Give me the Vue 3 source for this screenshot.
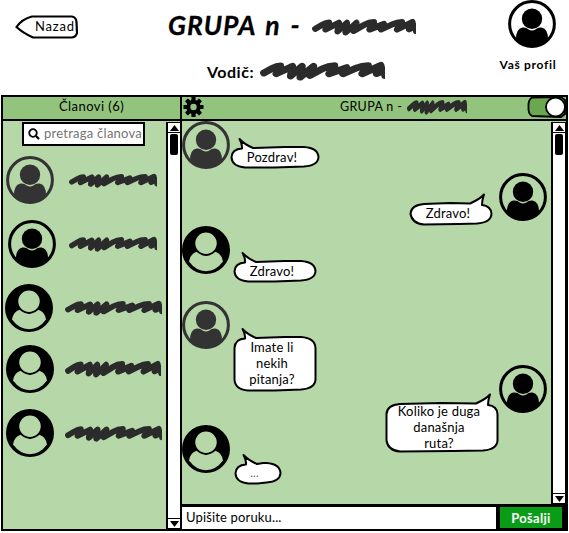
<script setup>
import { h } from 'vue'

const members = [
  { variant: 'solid', tone: 'gray', left: 3, top: 35, gap: 15, w: 88, h: 15 },
  { variant: 'solid', tone: 'black', left: 5, top: 16, gap: 13, w: 88, h: 16 },
  { variant: 'cutout', tone: 'black', left: 2, top: 16, gap: 12, w: 97, h: 16 },
  { variant: 'cutout', tone: 'black', left: 3, top: 13, gap: 11, w: 96, h: 18 },
  { variant: 'cutout', tone: 'black', left: 3, top: 16, gap: 11, w: 97, h: 17 },
]

const messages = [
  { lines: ['Pozdrav!'], side: 'left', variant: 'solid', tone: 'gray', rowH: 52, x: 0, y: 16, w: 90, h: 32 },
  { lines: ['Zdravo!'], side: 'right', variant: 'solid', tone: 'black', rowH: 53, x: 6, y: 20, w: 84, h: 33 },
  { lines: ['Zdravo!'], side: 'left', variant: 'cutout', tone: 'black', rowH: 75, x: 3, y: 25, w: 84, h: 32 },
  { lines: ['Imate li', 'nekih', 'pitanja?'], side: 'left', variant: 'solid', tone: 'gray', rowH: 64, x: 3, y: 26, w: 84, h: 65 },
  { lines: ['Koliko je duga', 'današnja', 'ruta?'], side: 'right', variant: 'solid', tone: 'black', rowH: 60, x: 0, y: 28, w: 114, h: 60 },
  { lines: ['...'], side: 'left', variant: 'cutout', tone: 'black', rowH: 60, x: 4, y: 28, w: 48, h: 32 },
]

function bubblePath(m) {
  const w = m.w - 1
  const b = m.h - 1.5
  const t = 10
  const r = Math.min(15, m.w * 0.3)
  const v = Math.min(11, (b - t) / 2)
  if (m.side === 'left') {
    return `M12 ${t + 1.5} Q12.500 7 9.500 2 Q14 7 23 ${t + 1} L${w * 0.62} ${t} L${w - r} ${t} Q${w - 1} ${t + 1} ${w - 0.5} ${t + v} L${w - 0.5} ${b - v} Q${w - 1} ${b - 2} ${w - r} ${b - 1} L${w * 0.5} ${b} L${r} ${b} Q2 ${b - 1} 1.5 ${b - v} L1.5 ${t + v} Q2 ${t + 2} 12 ${t + 1.5} Z`
  }
  return `M${w - 10} ${t + 2} Q${w - 10} 7 ${w - 8} 1.5 Q${w - 12} 6 ${w - 22} ${t + 0.5} L${w * 0.5} ${t} L${r} ${t + 1} Q2 ${t + 2} 1.5 ${t + v} L1.5 ${b - v} Q3 ${b - 1} ${r} ${b} L${w * 0.6} ${b - 0.5} L${w - r} ${b - 1} Q${w - 1} ${b - 2} ${w - 0.5} ${b - v} L${w - 0.5} ${t + v} Q${w - 1} ${t + 3} ${w - 10} ${t + 2} Z`
}

const Avatar = (props) =>
  h('svg', { viewBox: '0 0 48 48', width: 48, height: 48 },
    props.variant === 'cutout'
      ? [
          h('path', {
            'fill-rule': 'evenodd',
            fill: 'currentColor',
            d: 'M24 0A24 24 0 1 0 24 48A24 24 0 1 0 24 0Z M24 6.500A10.700 10.700 0 1 1 24 28A10.700 10.700 0 1 1 24 6.500Z M14.500 25.800Q24 34 33.500 25.800Q40 28 41 35.500Q34 45 24 45.200Q14 45 7 35.500Q8 28 14.500 25.800Z',
          }),
        ]
      : [
          h('circle', { cx: 24, cy: 24, r: 22.4, fill: 'none', stroke: 'currentColor', 'stroke-width': 3 }),
          h('circle', { cx: 24, cy: 18.7, r: 10.2, fill: 'currentColor' }),
          h('path', { fill: 'currentColor', d: 'M8 40Q7.500 29 14.500 27.500Q18 27 21 29.700Q24 31.200 27 29.700Q30 27 33.500 27.500Q40.500 29 40 40Q33 47 24 47Q15 47 8 40Z' }),
        ])
Avatar.props = ['variant']

const Scribble = (props) =>
  h('svg', {
    viewBox: props.short ? '0 0 60 16' : '0 0 104 18',
    width: props.w,
    height: props.h,
    preserveAspectRatio: 'none',
  }, [
    h('path', {
      fill: 'none',
      stroke: '#2b2b2b',
      'stroke-width': 6.2,
      'stroke-linecap': 'round',
      'stroke-linejoin': 'round',
      d: props.short
        ? 'M3.200 9L9 5.500Q12 4 14.500 4L12 9.500L24 4.500L22.500 12L34 4.500L32 12.500L43 4.500L41 12L57 4L52 10L62 9'
        : 'M3.200 10.800L10 6.800Q14 4.500 17 4.500L13.500 11.500L27 4.800L25.500 13.500L35 4.800L33.500 14.500L44.500 4.800L41.500 13L52 7Q57 4.200 62 4.200L57.500 11.500L72 6L69 11.500L80 6.500Q85 4.200 90 4.200L85 11.500L100.500 4L97 11.300L104 8L104 13',
    }),
  ])
Scribble.props = ['w', 'h', 'short']
</script>

<template>
  <div class="screen">
    <header class="top">
      <a class="back">
        <svg class="layer" width="64" height="24" viewBox="0 0 64 24"><path d="M17 1.500L57 1.500Q61 2 61.500 7L62 18Q61 22 57 22.500L18 22.500Q8 18 1.500 12Q7 4 17 1.500Z" fill="#fff" stroke="#000" stroke-width="2.200" /></svg>
        <span>Nazad</span>
      </a>
      <div class="headings">
        <h1><span>GRUPA n -</span><Scribble :w="104" :h="18" /></h1>
        <h2><span>Vodič:</span><Scribble :w="125" :h="20" /></h2>
      </div>
      <div class="profile">
        <Avatar variant="solid" />
        <span>Vaš profil</span>
      </div>
    </header>

    <main class="panels">
      <section class="members">
        <div class="bar bar-members"><span>Članovi (6)</span></div>
        <div class="body">
          <div class="list">
            <label class="search">
              <svg width="12" height="12" viewBox="0 0 12 12"><circle cx="5" cy="5" r="3.800" fill="none" stroke="#000" stroke-width="1.800" /><path d="M8 8L11 11" stroke="#000" stroke-width="2.200" /></svg>
              <span>pretraga članova</span>
            </label>
            <div v-for="(m, i) in members" :key="i" class="member" :class="m.tone" :style="{ marginTop: m.top + 'px', paddingLeft: m.left + 'px', gap: m.gap + 'px' }">
              <Avatar :variant="m.variant" />
              <Scribble :w="m.w" :h="m.h" />
            </div>
          </div>
          <div class="scroll">
            <i class="arrow"><svg width="9" height="6" viewBox="0 0 9 6"><path d="M4.500 0L9 6H0Z" /></svg></i>
            <i class="thumb"></i>
            <i class="arrow end"><svg width="9" height="6" viewBox="0 0 9 6"><path d="M4.500 6L9 0H0Z" /></svg></i>
          </div>
        </div>
      </section>

      <section class="chat">
        <div class="bar bar-chat">
          <svg class="gear" width="21" height="20" viewBox="-10 -10 20 20">
            <circle r="5.200" fill="none" stroke="#000" stroke-width="4" />
            <rect v-for="n in 8" :key="n" x="-2.100" y="-10" width="4.200" height="4.500" rx=".6" :transform="`rotate(${n * 45})`" />
          </svg>
          <div class="room"><span>GRUPA n -</span><Scribble :w="60" :h="16" short /></div>
          <svg class="toggle" width="39" height="22" viewBox="0 0 39 22">
            <path d="M5 1.500L34 1L38 4L38 18L34 21L5 20Q1 18 1.500 11Q1 4 5 1.500Z" fill="#6aa84f" stroke="#000" stroke-width="1.800" />
            <circle cx="28.500" cy="11" r="9.500" fill="#fff" stroke="#000" stroke-width="1.800" />
          </svg>
        </div>
        <div class="body">
          <div class="messages">
            <div v-for="(m, i) in messages" :key="i" class="message" :class="[m.side]" :style="{ height: m.rowH + 'px', gap: m.x + 'px' }">
              <Avatar :variant="m.variant" :class="m.tone" />
              <div class="bubble" :style="{ marginTop: m.y + 'px', width: m.w + 'px', height: m.h + 'px' }">
                <svg class="layer" :width="m.w" :height="m.h"><path :d="bubblePath(m)" fill="#fff" stroke="#000" stroke-width="2" stroke-linejoin="round" /></svg>
                <p :class="{ dots: m.lines[0] === '...' }"><span v-for="line in m.lines" :key="line">{{ line }}</span></p>
              </div>
            </div>
          </div>
          <div class="scroll">
            <i class="arrow"><svg width="9" height="6" viewBox="0 0 9 6"><path d="M4.500 0L9 6H0Z" /></svg></i>
            <i class="thumb"></i>
            <i class="arrow end"><svg width="9" height="6" viewBox="0 0 9 6"><path d="M4.500 6L9 0H0Z" /></svg></i>
          </div>
        </div>
        <div class="composer">
          <div class="input">Upišite poruku...</div>
          <button>Pošalji</button>
        </div>
      </section>
    </main>
  </div>
</template>

<style>
body { margin: 0; background: #fff; }
</style>

<style scoped>
* { box-sizing: border-box; }
.screen { width: 569px; height: 533px; overflow: hidden; font-family: Lato, "Noto Sans", sans-serif; color: #000; background: #fff; font-size: 13px; }
svg { display: block; flex: none; }
span { white-space: nowrap; }
.top { display: flex; height: 95px; padding-left: 15px; }
.back { display: grid; width: 64px; height: 24px; margin-top: 15px; align-items: center; }
.back > * { grid-area: 1 / 1; }
.back span { padding-left: 20px; letter-spacing: .8px; line-height: 22px; margin-bottom: 2px; }
.headings { width: 340px; margin-left: 84px; padding-left: 5px; }
h1, h2 { display: flex; align-items: center; margin: 0; }
h1 { height: 34px; margin-top: 9px; font-size: 26.5px; font-style: italic; font-weight: 700; gap: 10px; line-height: 30px; -webkit-text-stroke: .3px #000; }
h1 span { width: 134px; letter-spacing: 1px; word-spacing: 3px; margin-top: -2px; }
h1 svg { margin-top: 1px; }
h2 { height: 26px; margin-top: 15px; padding-left: 39px; font-size: 16px; gap: 5px; }
h2 span { width: 48px; letter-spacing: .5px; }
.profile { display: flex; flex-direction: column; align-items: center; width: 66px; margin-left: -8px; font-size: 12px; font-weight: 700; }
.profile svg { margin-left: 8px; }
.profile span { line-height: 16px; margin-top: 9px; letter-spacing: .7px; }

.panels { display: flex; height: 436px; width: 568px; }
.members { display: flex; flex-direction: column; width: 181px; border: 2px solid #000; margin-left: 1px; background: #b6d7a8; }
.chat { display: flex; flex-direction: column; flex: 1; border: solid #000; border-width: 2px 2px 2px 0; background: #b6d7a8; }
.bar { display: flex; align-items: center; height: 24px; flex: none; background: #93c47d; border-bottom: 2px solid #000; }
.bar-members { justify-content: center; }
.bar-members span { letter-spacing: .45px; line-height: 16px; margin-top: -4px; }
.bar-chat { padding-left: 1px; }
.gear, .toggle { margin-top: -2px; }
.room { display: flex; align-items: center; flex: 1; padding-left: 136px; gap: 4px; margin-top: -3px; }
.room span { width: 63px; font-size: 12.5px; letter-spacing: .35px; }
.body { display: flex; flex: 1; min-height: 0; }
.list { flex: 1; min-width: 0; overflow: hidden; }
.search { display: flex; align-items: center; gap: 4px; width: 123px; height: 24px; margin: 1px 0 0 19px; padding-left: 4px; background: #fff; border: 2px solid #000; color: #747474; overflow: hidden; }
.search span { letter-spacing: .25px; line-height: 16px; margin-top: -3px; }
.search + .member { margin-top: 10px !important; }
.member { display: flex; align-items: center; height: 48px; }
.gray { color: #333; }
.black { color: #000; }
.scroll { display: flex; flex-direction: column; width: 14px; border: solid #000; border-width: 1px 0 1px 2px; background: #fff; margin-top: 1px; }
.chat .scroll { width: 15px; border-right-width: 1px; }
.arrow { display: flex; align-items: center; justify-content: center; height: 10px; flex: none; border-bottom: 1px solid #000; }
.arrow.end { margin-top: auto; border-bottom: 0; border-top: 1px solid #000; }
.thumb { width: 8px; height: 21px; margin: 1px auto 0; border-radius: 2px; background: #000; }
.messages { flex: 1; min-width: 0; }
.message { display: flex; align-items: flex-start; }
.message.right { flex-direction: row-reverse; padding-right: 4px; }
.bubble { display: grid; flex: none; }
.bubble > * { grid-area: 1 / 1; }
.bubble .layer { overflow: visible; }
.bubble p { display: flex; flex-direction: column; justify-content: center; align-items: center; margin: 9px 6px 2px 0; font-size: 13px; line-height: 16px; letter-spacing: .2px; z-index: 1; }
.bubble p.dots { color: #555; font-size: 11px; margin-right: 7px; }
.composer { display: flex; height: 25px; flex: none; border-top: 3px solid #000; }
.input { flex: 1; background: #fff; padding-left: 4px; line-height: 20px; letter-spacing: .15px; border-right: 2px solid #000; }
button { width: 68px; padding: 0; border: solid #000; border-width: 0 4px 1px 2px; background: #0a9c17; color: #fff; font: 700 13px/18px Lato, sans-serif; letter-spacing: .3px; }
</style>
